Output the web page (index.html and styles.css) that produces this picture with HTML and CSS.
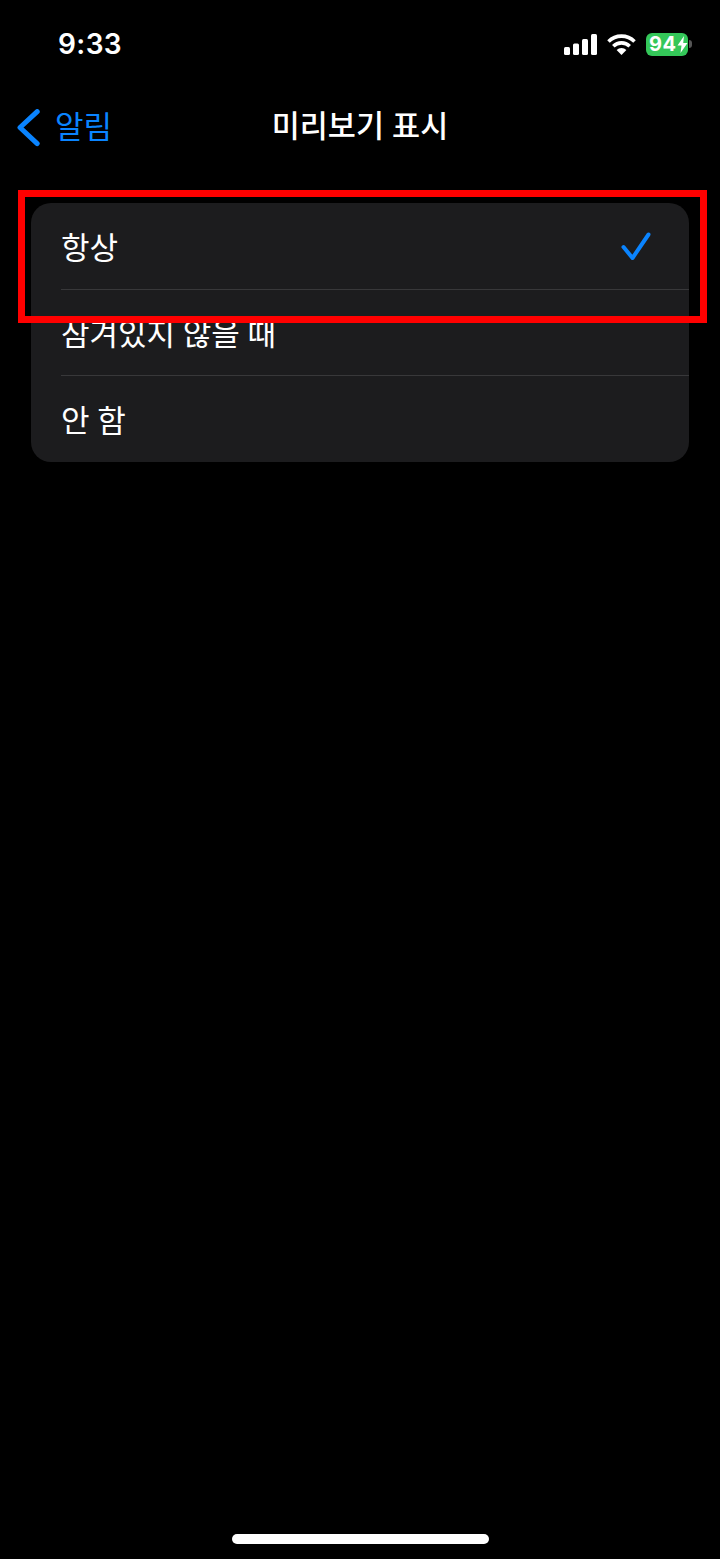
FILE: index.html
```html
<!DOCTYPE html>
<html lang="ko">
<head>
    <meta charset="UTF-8">
    <meta name="viewport" content="width=device-width, initial-scale=1.0">
    <title>미리보기 표시</title>
    <link rel="stylesheet" href="styles.css">
</head>
<body>
    <div class="screen">
        <div class="status-bar">
            <span class="time">9:33</span>
            <div class="status-icons">
                <svg class="signal" width="33" height="21" viewBox="0 0 33 21">
                    <rect x="0" y="13" width="6" height="8" rx="1.5" fill="#fff"/>
                    <rect x="9" y="9.5" width="6" height="11.5" rx="1.5" fill="#fff"/>
                    <rect x="18" y="5" width="6" height="16" rx="1.5" fill="#fff"/>
                    <rect x="27" y="0" width="6" height="21" rx="1.5" fill="#fff"/>
                </svg>
                <svg class="wifi" width="29" height="21" viewBox="0 0 29 21">
                    <path d="M1.5 7.5 A18.5 18.5 0 0 1 27.5 7.5" fill="none" stroke="#fff" stroke-width="3.6"/>
                    <path d="M6.3 12.2 A11.8 11.8 0 0 1 22.7 12.2" fill="none" stroke="#fff" stroke-width="3.6"/>
                    <path d="M14.5 21 L9.6 16 A7 7 0 0 1 19.4 16 Z" fill="#fff"/>
                </svg>
                <div class="battery">
                    <div class="battery-body">
                        <span class="battery-level">94</span>
                        <svg width="11" height="17" viewBox="0 0 11 17">
                            <path d="M7 0 L0.5 9.5 H4.5 L3.5 17 L10.5 7 H6.2 Z" fill="#fff"/>
                        </svg>
                    </div>
                    <div class="battery-cap"></div>
                </div>
            </div>
        </div>

        <div class="nav-bar">
            <div class="back">
                <svg class="chevron" width="24" height="38" viewBox="0 0 24 38">
                    <path d="M21.2 2.6 L4 18.5 L21.2 34.6" fill="none" stroke="#0a84ff" stroke-width="5" stroke-linecap="round" stroke-linejoin="round"/>
                </svg>
                <span>알림</span>
            </div>
            <h1 class="nav-title">미리보기 표시</h1>
        </div>

        <div class="option-list">
            <div class="option">
                <span>항상</span>
                <svg class="check" width="32" height="32" viewBox="0 0 32 32">
                    <path d="M3.5 18 L12.5 29 L28.5 5.5" fill="none" stroke="#0a84ff" stroke-width="4" stroke-linecap="round" stroke-linejoin="round"/>
                </svg>
            </div>
            <div class="option"><span>잠겨있지 않을 때</span></div>
            <div class="option"><span>안 함</span></div>
        </div>

        <div class="highlight"></div>
        <div class="home-indicator"></div>
    </div>
</body>
</html>
```

FILE: styles.css
```css
body {
    margin: 0;
    background-color: #000;
    color: #fff;
    font-family: 'Inter', 'Noto Sans CJK KR', sans-serif;
}
.screen {
    position: relative;
    width: 720px;
    height: 1559px;
    overflow: hidden;
    display: flex;
    flex-direction: column;
}
.status-bar {
    height: 88px;
    padding: 0 28px 0 58px;
    display: flex;
    justify-content: space-between;
    align-items: center;
    box-sizing: border-box;
}
.time {
    font-size: 28px;
    font-weight: 600;
    letter-spacing: 0.4px;
}
.status-icons {
    display: flex;
    align-items: center;
    gap: 10px;
}
.battery {
    display: flex;
    align-items: center;
    gap: 1px;
}
.battery-body {
    width: 42px;
    height: 23px;
    padding-left: 3px;
    box-sizing: border-box;
    background-color: #34c759;
    border-radius: 6px;
    display: flex;
    align-items: center;
}
.battery-level {
    font-size: 20px;
    font-weight: 700;
    line-height: 23px;
    letter-spacing: 0.5px;
}
.battery-cap {
    width: 3px;
    height: 8px;
    background-color: #555;
    border-radius: 0 3px 3px 0;
}
.nav-bar {
    position: relative;
    height: 74px;
    display: flex;
    align-items: center;
    justify-content: center;
}
.back {
    position: absolute;
    left: 16px;
    top: 19px;
    display: flex;
    align-items: center;
    gap: 15px;
    color: #0a84ff;
    font-size: 31px;
    line-height: 34px;
}
.chevron {
    margin-top: 2px;
}
.nav-title {
    margin: 0 0 2px;
    font-size: 30.5px;
    font-weight: 500;
}
.option-list {
    margin: 41px 31px 0;
    background-color: #1c1c1e;
    border-radius: 20px;
    padding-left: 30px;
}
.option {
    height: 86px;
    padding: 0 37px 2px 0;
    display: flex;
    align-items: center;
    justify-content: space-between;
    border-bottom: 1px solid #38383a;
    box-sizing: border-box;
    font-size: 31px;
    word-spacing: -1px;
}
.option:first-child {
    height: 87px;
}
.option:last-child {
    height: 86px;
    border-bottom: none;
}
.highlight {
    position: absolute;
    left: 18px;
    top: 190px;
    width: 689px;
    height: 133px;
    border: 7px solid #ff0000;
    box-sizing: border-box;
}
.home-indicator {
    position: absolute;
    left: 232px;
    top: 1534px;
    width: 257px;
    height: 10px;
    background-color: #fff;
    border-radius: 5px;
}
```
